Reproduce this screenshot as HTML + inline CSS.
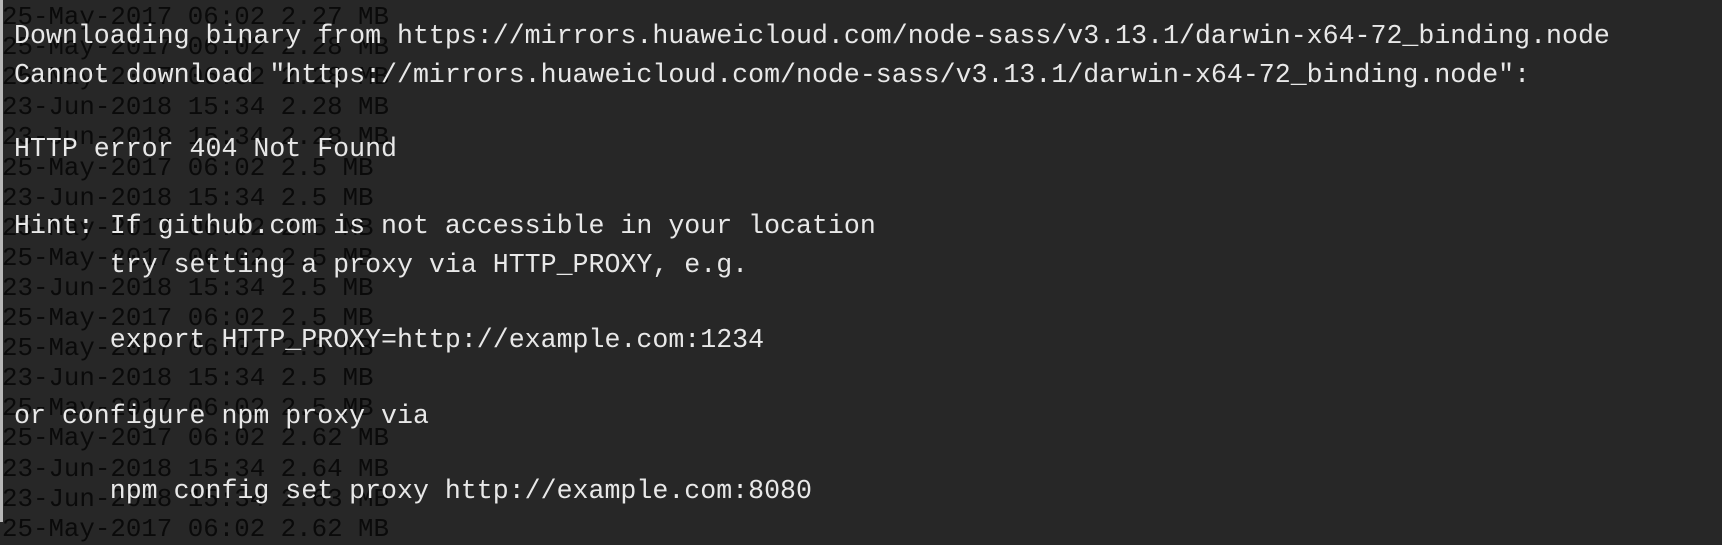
<!DOCTYPE html>
<html><head><meta charset="utf-8"><style>
html,body{margin:0;padding:0}
body{width:1722px;height:522px;background:#272727;position:relative;overflow:hidden}
.bar{position:absolute;left:0;top:0;width:3px;height:522px;background:#b8b8b8}
.dk{position:absolute;left:2px;top:-27px;font-family:"Liberation Mono",monospace;font-size:25.8px;line-height:30.1px;color:#0a0a0a;white-space:pre;margin:0}
.w{position:absolute;left:14px;font-family:"Liberation Mono",monospace;font-size:26.6px;color:#e8e8e8;white-space:pre;line-height:30px}
</style></head><body>
<div class="bar"></div>
<pre class="dk">25-May-2017 06:02 2.27 MB
25-May-2017 06:02 2.27 MB
25-May-2017 06:02 2.28 MB
25-May-2017 06:02 2.28 MB
23-Jun-2018 15:34 2.28 MB
23-Jun-2018 15:34 2.28 MB
25-May-2017 06:02 2.5 MB
23-Jun-2018 15:34 2.5 MB
25-May-2017 06:02 2.5 MB
25-May-2017 06:02 2.5 MB
23-Jun-2018 15:34 2.5 MB
25-May-2017 06:02 2.5 MB
25-May-2017 06:02 2.5 MB
23-Jun-2018 15:34 2.5 MB
25-May-2017 06:02 2.5 MB
25-May-2017 06:02 2.62 MB
23-Jun-2018 15:34 2.64 MB
23-Jun-2018 15:34 2.63 MB
25-May-2017 06:02 2.62 MB</pre>
<div class="w" style="top:21px">Downloading binary from https://mirrors.huaweicloud.com/node-sass/v3.13.1/darwin-x64-72_binding.node</div>
<div class="w" style="top:60px">Cannot download "https://mirrors.huaweicloud.com/node-sass/v3.13.1/darwin-x64-72_binding.node":</div>
<div class="w" style="top:134px">HTTP error 404 Not Found</div>
<div class="w" style="top:211px">Hint: If github.com is not accessible in your location</div>
<div class="w" style="top:250px">      try setting a proxy via HTTP_PROXY, e.g.</div>
<div class="w" style="top:325px">      export HTTP_PROXY=http://example.com:1234</div>
<div class="w" style="top:401px">or configure npm proxy via</div>
<div class="w" style="top:476px">      npm config set proxy http://example.com:8080</div>
</body></html>
